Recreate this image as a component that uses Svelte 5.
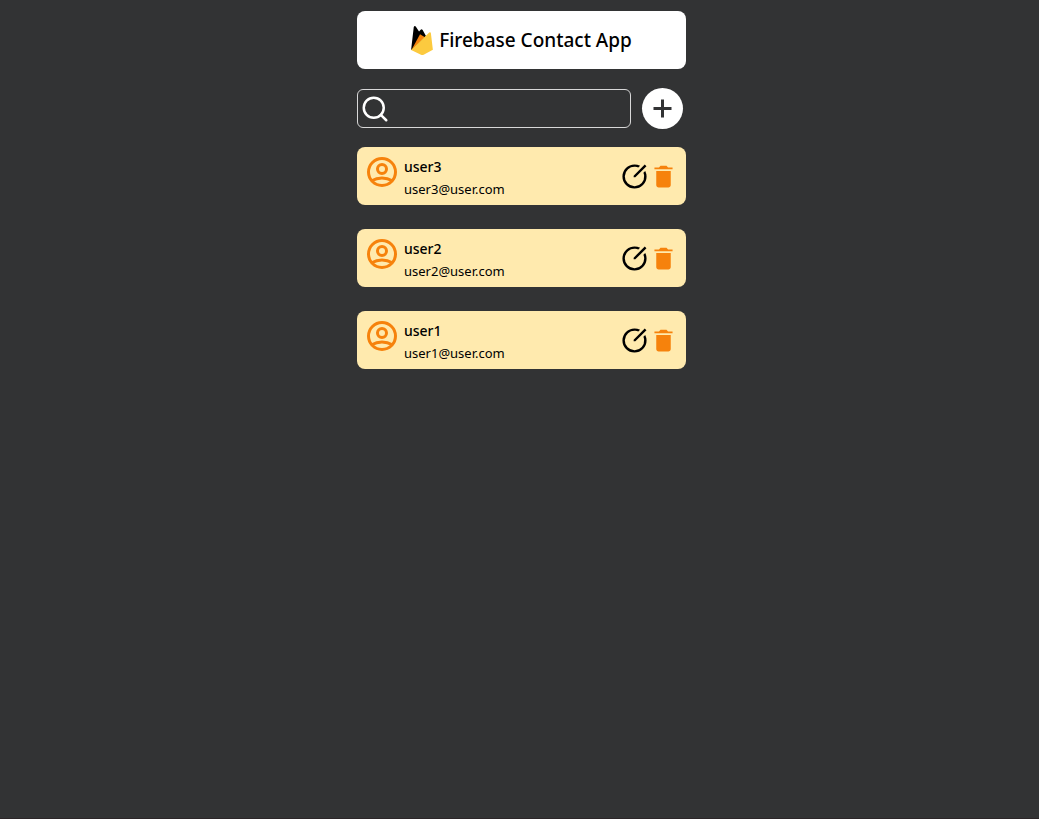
<script>
  const contacts = [
    { id: 3, name: 'user3', email: 'user3@user.com' },
    { id: 2, name: 'user2', email: 'user2@user.com' },
    { id: 1, name: 'user1', email: 'user1@user.com' }
  ];
</script>

<div class="page">
  <main class="app">
    <header class="banner">
      <svg class="logo" viewBox="0 0 66 88" aria-hidden="true">
        <path fill="#000" d="M0 72 8 3q3-6 7 0l9 14 5-6q3-3 6 1l10 18-8 12L1 73z" />
        <path fill="#f5820d" d="M1 73 27 25l15 9z" />
        <path fill="#fcca3f" d="M0 73 55 20q4-3 5 2l6 50-28 15q-4 2-8 0z" />
      </svg>
      <h1>Firebase Contact App</h1>
    </header>

    <div class="toolbar">
      <label class="search">
        <svg viewBox="0 0 24 24" aria-hidden="true">
          <circle cx="11" cy="11" r="8" />
          <path d="M21 21l-4.35-4.35" />
        </svg>
        <input type="text" aria-label="Search contacts" />
      </label>
      <button class="add" type="button" aria-label="Add contact">
        <svg viewBox="0 0 41 41" aria-hidden="true">
          <path d="M20.5 11.5v18M11.5 20.5h18" />
        </svg>
      </button>
    </div>

    <ul class="list">
      {#each contacts as contact (contact.id)}
        <li class="card">
          <svg class="avatar" viewBox="0 0 24 24" aria-hidden="true">
            <path d="M5.121 17.804A13.937 13.937 0 0112 16c2.5 0 4.847.655 6.879 1.804M15 10a3 3 0 11-6 0 3 3 0 016 0zm6 2a9 9 0 11-18 0 9 9 0 0118 0z" />
          </svg>
          <div class="info">
            <h2>{contact.name}</h2>
            <p>{contact.email}</p>
          </div>
          <div class="actions">
            <button type="button" aria-label="Edit {contact.name}">
              <svg viewBox="0 0 24 24" aria-hidden="true">
                <path d="M12.684 4.029a8 8 0 1 0 7.287 7.287 7.936 7.936 0 0 0-.603-2.44l1.5-1.502A9.933 9.933 0 0 1 22 12c0 5.523-4.477 10-10 10S2 17.523 2 12 6.477 2 12 2a9.982 9.982 0 0 1 4.626 1.132l-1.501 1.5a7.941 7.941 0 0 0-2.44-.603zM20.485 2.1L21.9 3.515l-9.192 9.192-1.412.003-.002-1.417L20.485 2.1z" />
              </svg>
            </button>
            <button class="delete" type="button" aria-label="Delete {contact.name}">
              <svg viewBox="0 0 512 512" aria-hidden="true">
                <path d="M128 405.429C128 428.846 147.198 448 170.667 448h170.667C364.802 448 384 428.846 384 405.429V160H128v245.429zM416 96h-80l-26.785-32H202.786L176 96H96v32h320V96z" />
              </svg>
            </button>
          </div>
        </li>
      {/each}
    </ul>
  </main>
</div>

<style>
  :global(body) {
    margin: 0;
    background: #323334;
  }

  .page {
    box-sizing: border-box;
    min-height: 100vh;
    padding: 11px 12px 24px 16px;
    border-bottom: 1px solid #2c2628;
    font-family: 'Segoe UI', 'Noto Sans', 'Open Sans', sans-serif;
    color: #000;
  }

  .app {
    max-width: 329px;
    margin: 0 auto;
  }

  h1,
  h2,
  p,
  ul {
    margin: 0;
    padding: 0;
  }

  svg {
    display: block;
    flex: none;
  }

  button {
    padding: 0;
    border: 0;
    background: none;
    color: inherit;
    cursor: pointer;
  }

  .banner {
    display: flex;
    align-items: center;
    justify-content: center;
    gap: 6px;
    height: 58px;
    border-radius: 8px;
    background: #fff;
  }

  .logo {
    width: 22px;
    height: 29px;
  }

  h1 {
    font-size: 19px;
    font-weight: 500;
    line-height: 28px;
  }

  .toolbar {
    display: flex;
    align-items: center;
    gap: 11px;
    margin: 19px 3px 18px 0;
  }

  .search {
    box-sizing: border-box;
    display: flex;
    flex: 1;
    align-items: center;
    min-width: 0;
    height: 39px;
    padding: 0 2px;
    border: 1px solid #d8d8d8;
    border-radius: 6px;
  }

  .search svg {
    width: 30px;
    height: 30px;
    fill: none;
    stroke: #fff;
    stroke-width: 2;
    stroke-linecap: round;
  }

  .search input {
    flex: 1;
    min-width: 0;
    height: 100%;
    padding: 0 4px;
    border: 0;
    outline: 0;
    background: transparent;
    color: #fff;
    font: inherit;
  }

  .add {
    width: 41px;
    height: 41px;
    border-radius: 50%;
    background: #fff;
  }

  .add svg {
    width: 41px;
    height: 41px;
    stroke: #323334;
    stroke-width: 3;
  }

  .list {
    display: grid;
    gap: 24px;
    list-style: none;
  }

  .card {
    box-sizing: border-box;
    display: flex;
    align-items: center;
    height: 58px;
    padding: 0 8px 0 7px;
    border-radius: 8px;
    background: #ffeaae;
  }

  .avatar {
    align-self: flex-start;
    width: 36px;
    height: 36px;
    margin-top: 7px;
    fill: none;
    stroke: #f6820c;
    stroke-width: 2;
    stroke-linecap: round;
    stroke-linejoin: round;
  }

  .info {
    flex: 1;
    min-width: 0;
    padding: 4px 0 0 4px;
  }

  h2 {
    font-size: 14px;
    font-weight: 500;
    line-height: 22px;
  }

  p {
    font-size: 13px;
    line-height: 22px;
  }

  .actions {
    display: flex;
  }

  .actions svg {
    width: 29px;
    height: 29px;
    fill: currentColor;
  }

  .delete {
    color: #f6820c;
  }
</style>
